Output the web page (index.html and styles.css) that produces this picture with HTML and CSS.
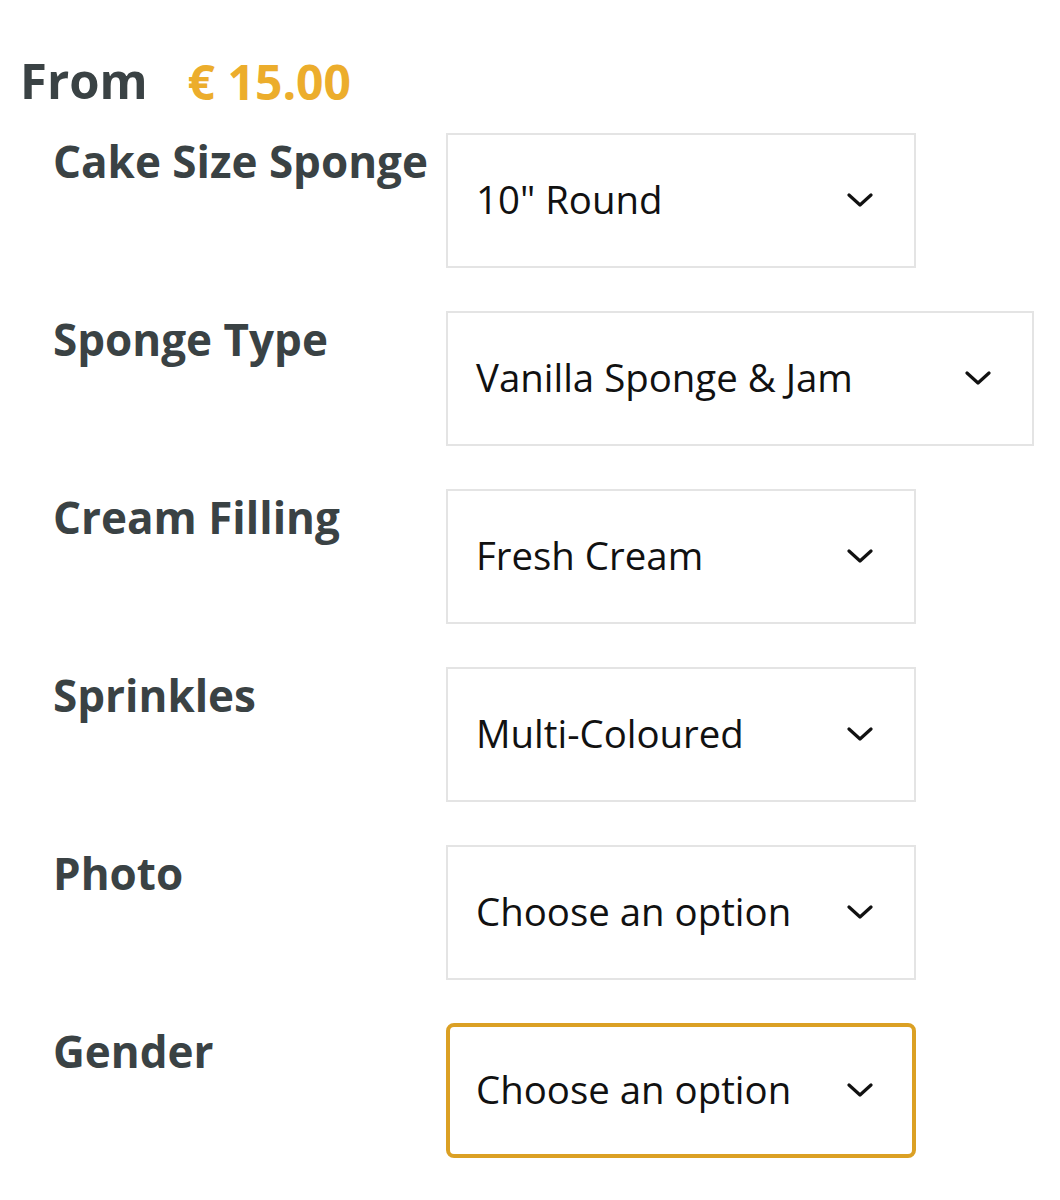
FILE: index.html
```html
<!DOCTYPE html>
<html>
<head>
<meta charset="utf-8">
<link rel="stylesheet" href="styles.css">
</head>
<body>
<div class="page">
  <div class="price-line">
    <span class="from">From</span>
    <span class="price">€ 15.00</span>
  </div>
  <div class="variations">
    <div class="label">Cake Size Sponge</div>
    <div class="select"><span>10" Round</span><svg class="chev" viewBox="0 0 26 16"><path d="M2 3 L13 13 L24 3" /></svg></div>

    <div class="label">Sponge Type</div>
    <div class="select wide"><span>Vanilla Sponge &amp; Jam</span><svg class="chev" viewBox="0 0 26 16"><path d="M2 3 L13 13 L24 3" /></svg></div>

    <div class="label">Cream Filling</div>
    <div class="select"><span>Fresh Cream</span><svg class="chev" viewBox="0 0 26 16"><path d="M2 3 L13 13 L24 3" /></svg></div>

    <div class="label">Sprinkles</div>
    <div class="select"><span>Multi-Coloured</span><svg class="chev" viewBox="0 0 26 16"><path d="M2 3 L13 13 L24 3" /></svg></div>

    <div class="label">Photo</div>
    <div class="select"><span>Choose an option</span><svg class="chev" viewBox="0 0 26 16"><path d="M2 3 L13 13 L24 3" /></svg></div>

    <div class="label">Gender</div>
    <div class="select focused"><span>Choose an option</span><svg class="chev" viewBox="0 0 26 16"><path d="M2 3 L13 13 L24 3" /></svg></div>
  </div>
</div>
</body>
</html>
```
FILE: styles.css
```css
html, body {
  margin: 0;
  padding: 0;
  background: #ffffff;
}
body {
  font-family: "Open Sans", "Liberation Sans", sans-serif;
}
.page {
  padding: 50px 0 0 20px;
}
.price-line {
  display: flex;
  align-items: baseline;
  gap: 40px;
  height: 60px;
  line-height: 60px;
}
.from {
  font-size: 49px;
  font-weight: 700;
  color: #3a4244;
}
.price {
  font-size: 48px;
  font-weight: 700;
  color: #ecad2c;
  position: relative;
  top: 1px;
}
.variations {
  display: grid;
  grid-template-columns: 393px auto;
  justify-content: start;
  align-items: start;
  row-gap: 43px;
  padding: 23px 0 0 33px;
}
.label {
  font-size: 44px;
  font-weight: 700;
  color: #3a4244;
  line-height: 60px;
  margin-top: -2px;
}
.select {
  box-sizing: border-box;
  width: 470px;
  height: 135px;
  border: 2px solid #e4e4e4;
  display: flex;
  align-items: center;
  justify-content: space-between;
  padding: 0 41px 4px 28px;
  font-size: 38.4px;
  color: #111111;
  background: #fff;
}
.select .chev {
  margin-top: 2px;
}
.select.wide {
  width: 588px;
}
.select.focused {
  border: 4px solid #dba024;
  border-radius: 8px;
  padding: 0 39px 4px 26px;
}
.chev {
  width: 26px;
  height: 16px;
  fill: none;
  stroke: #111;
  stroke-width: 3.2;
  stroke-linecap: round;
  stroke-linejoin: round;
}
```
